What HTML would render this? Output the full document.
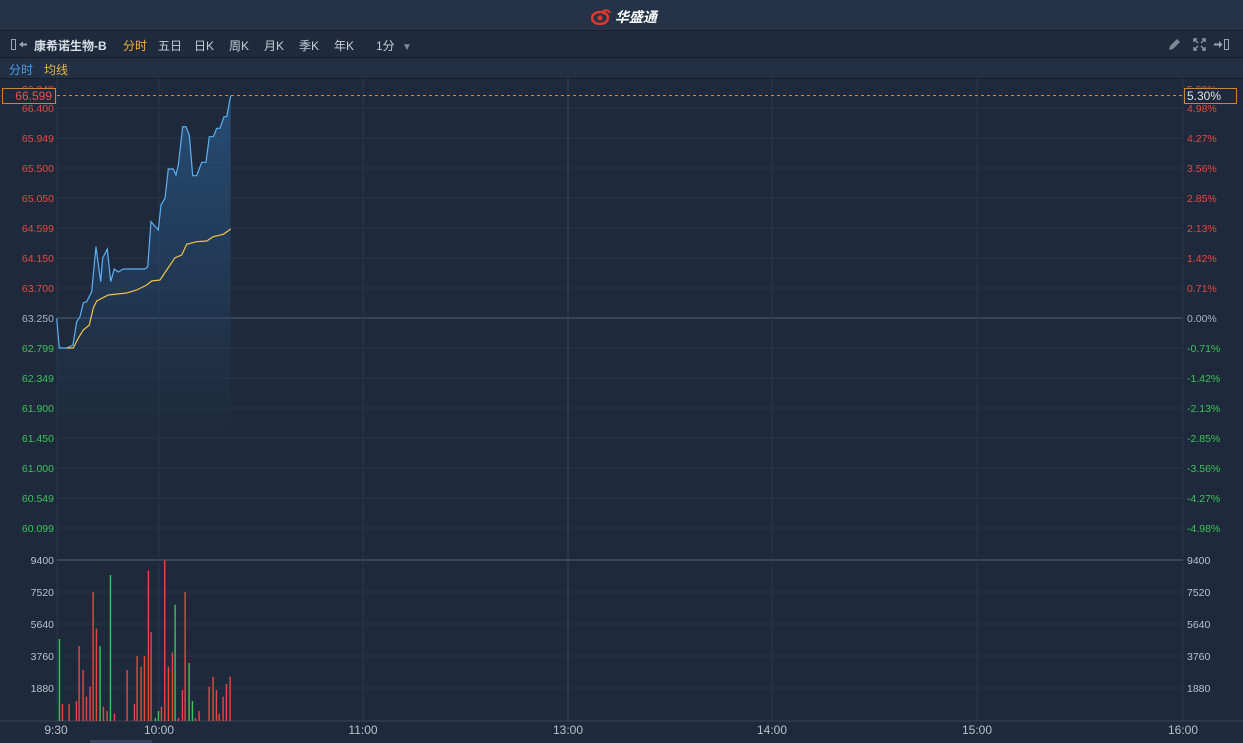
<!DOCTYPE html><html><head><meta charset="utf-8"><style>
body{margin:0;width:1243px;height:743px;background:#1e2a3b;font-family:"Liberation Sans","Noto Sans CJK SC",sans-serif;overflow:hidden;position:relative}
.top{position:absolute;left:0;top:0;width:1243px;height:30px;background:#253348;border-bottom:1px solid #161f2c}
.logo{position:absolute;left:591px;top:7px;color:#fff;font-weight:bold;font-size:14px;font-style:italic}
.tb{position:absolute;left:0;top:31px;width:1243px;height:26px;background:#1f2b3d;border-bottom:1px solid #151e2a;font-size:12px;color:#c5cdd8}
.tb span{position:absolute;top:6px}
.r2{position:absolute;left:0;top:58px;width:1243px;height:20px;background:#223045;border-bottom:1px solid #151e2a;font-size:12px}
svg{position:absolute;left:0;top:0}
</style></head><body>
<div class="top"><div class="logo"><svg style="position:relative;display:inline-block;vertical-align:-3px" width="20" height="16" viewBox="0 0 20 16"><ellipse cx="9" cy="9" rx="8" ry="6" fill="none" stroke="#e4352d" stroke-width="2.5"/><circle cx="9" cy="9" r="2.5" fill="#e4352d"/><path d="M12 2 Q17 0 19 4" stroke="#e4352d" stroke-width="2" fill="none"/></svg> 华盛通</div></div>
<div class="tb">
<svg style="left:10px;top:7px" width="18" height="13"><rect x="1.5" y="1.5" width="4" height="10" fill="none" stroke="#9aa4b2"/><path d="M9 6.5 L13 3.5 V9.5Z M12 5.5 H17 V7.5 H12Z" fill="#9aa4b2"/></svg>
<span style="left:34px;font-weight:bold;color:#d8dee6">康希诺生物-B</span>
<span style="left:123px;color:#f0b23a">分时</span>
<span style="left:158px">五日</span><span style="left:194px">日K</span><span style="left:229px">周K</span><span style="left:264px">月K</span><span style="left:299px">季K</span><span style="left:334px">年K</span><span style="left:376px">1分 <span style="position:static;color:#7d8896;font-size:10px;margin-left:4px">▼</span></span>
<svg style="left:1166px;top:6px" width="16" height="15"><path d="M3 13 L4 9 L11 2 L14 5 L7 12 Z" fill="#7d8896"/></svg>
<svg style="left:1192px;top:6px" width="15" height="15"><path d="M2 5 V2 H5 M2 2 L6 6 M13 5 V2 H10 M13 2 L9 6 M2 10 V13 H5 M2 13 L6 9 M13 10 V13 H10 M13 13 L9 9" stroke="#8a95a3" stroke-width="1.4" fill="none"/></svg>
<svg style="left:1213px;top:6px" width="18" height="15"><path d="M1 6.5 H6 V4 L9.5 7.5 L6 11 V8.5 H1Z" fill="#9aa4b2"/><rect x="11.5" y="2.5" width="4" height="10" fill="none" stroke="#9aa4b2"/></svg>
</div>
<div class="r2"><span style="position:absolute;left:9px;top:3px;color:#4a9ee6">分时</span><span style="position:absolute;left:44px;top:3px;color:#e9b54a">均线</span></div>
<svg id="s" width="1243" height="743" style="top:0" font-family="Liberation Sans,sans-serif" font-size="11"></svg>
<script>
var s='',i;
for(i=0;i<15;i++){var y=108+i*30;s+='<line x1="57" x2="1183" y1="'+y+'" y2="'+y+'" stroke="#28364a"/>';}
for(i=0;i<5;i++){var y=560+i*32;s+='<line x1="57" x2="1183" y1="'+y+'" y2="'+y+'" stroke="'+(i==0?'#53627a':'#28364a')+'"/>';}
s+='<line x1="57" x2="1183" y1="318" y2="318" stroke="#4f5e74"/>';
[57,159,363,568,772,977,1183].forEach(function(x,k){s+='<line x1="'+x+'" x2="'+x+'" y1="78" y2="721" stroke="'+(k==3?'#35445a':'#28364a')+'"/>';});
s+='<line x1="0" x2="1243" y1="721" y2="721" stroke="#3a475a"/>';
var L=['66.849','66.400','65.949','65.500','65.050','64.599','64.150','63.700','63.250','62.799','62.349','61.900','61.450','61.000','60.549','60.099'];
var R=['5.69%','4.98%','4.27%','3.56%','2.85%','2.13%','1.42%','0.71%','0.00%','-0.71%','-1.42%','-2.13%','-2.85%','-3.56%','-4.27%','-4.98%'];
for(i=0;i<16;i++){var y=(i==0?89:108+(i-1)*30)+4;var c=i<8?'#e8473f':(i==8?'#aab3bf':'#3cc25a');
s+='<text x="54" y="'+y+'" text-anchor="end" fill="'+c+'" font-size="10.5">'+L[i]+'</text><text x="1187" y="'+y+'" fill="'+c+'" font-size="10.5">'+R[i]+'</text>';}
['9400','7520','5640','3760','1880'].forEach(function(t,k){var y=564+k*32;s+='<text x="54" y="'+y+'" text-anchor="end" fill="#b8c0cb" font-size="10.5">'+t+'</text><text x="1187" y="'+y+'" fill="#b8c0cb" font-size="10.5">'+t+'</text>';});
[['9:30',56],['10:00',159],['11:00',363],['13:00',568],['14:00',772],['15:00',977],['16:00',1183]].forEach(function(a){s+='<text x="'+a[1]+'" y="734" text-anchor="middle" fill="#b8c0cb" font-size="12">'+a[0]+'</text>';});
s+='<rect x="90" y="740" width="62" height="3" fill="#34435a"/>';
var B=[[56.7,318.3],[59.3,348],[66.7,348],[73,345],[76.7,321.7],[80,316.7],[83.3,303],[86.7,301.7],[91.7,291.7],[96,246.7],[97.7,260],[100.7,281.7],[102.7,258],[107.3,249],[110.7,281.7],[114.3,269],[118.3,272],[123.3,269],[145,269],[147.7,266.7],[151,221.7],[158.3,230],[161,205],[165,198.3],[168.3,169],[173.3,169],[176,175],[178.3,165],[182.7,126.7],[186,126.7],[189.3,135],[192.7,175.7],[196.7,175.7],[201.7,162.3],[206,162.3],[209.3,136.7],[213.3,136.7],[216.7,128.3],[220,128.3],[224,116.7],[226.7,116.7],[230.7,95.5]];
var Y=[[66.7,348],[73.3,348],[78.3,338],[83.3,330],[89.3,325],[93.3,308],[96.7,301],[108.3,295],[126.7,293],[136.7,290],[146.7,285],[151.7,281],[160,280],[166.7,270],[175,257.7],[181.7,255],[186.7,244.3],[196.7,241.7],[206.7,241],[213.3,236.7],[223.3,234.3],[230.7,229]];
var p=B.map(function(a){return a.join(',')}).join(' ');
s+='<defs><linearGradient id="g" x1="0" y1="0" x2="0" y2="1"><stop offset="0" stop-color="#2a5a8a" stop-opacity=".75"/><stop offset="0.5" stop-color="#24466c" stop-opacity=".45"/><stop offset="1" stop-color="#1e2a3b" stop-opacity="0"/></linearGradient></defs>';
s+='<polygon points="56.7,495 '+p+' 230.7,495" fill="url(#g)"/>';
s+='<polyline points="'+p+'" fill="none" stroke="#5cb0f2" stroke-width="1.2"/>';
s+='<polyline points="'+Y.map(function(a){return a.join(',')}).join(' ')+'" fill="none" stroke="#efc34a" stroke-width="1.2"/>';
s+='<line x1="57" x2="1183" y1="95.5" y2="95.5" stroke="#d98236" stroke-dasharray="3,3"/>';
s+='<rect x="2.5" y="88.5" width="53" height="15" fill="#1e2a3b" stroke="#c98538"/><text x="52" y="100" text-anchor="end" fill="#f0504a" font-size="12">66.599</text>';
s+='<rect x="1184.5" y="88.5" width="52" height="15" fill="#1e2a3b" stroke="#c98538"/><text x="1187" y="100" fill="#dde4ee" font-size="12">5.30%</text>';
var V=[[178,297,1],[187,492],[207,492],[229,483],[237,318],[249,390],[259,470],[270,440],[279,156],[289,266],[300,318,1],[310,500],[321,513],[331,105,1],[343,521],[381,390],[403,492],[411,348],[423,380],[433,348],[445,92],[453,276],[466,534,1],[475,513,1],[484,500],[494,62],[505,380],[517,338],[525,194,1],[535,534],[547,450],[555,156],[567,369,1],[577,483,1],[586,534],[597,513],[627,440],[639,410],[649,450],[657,521],[669,470],[679,432],[690,410]];
V.forEach(function(v){var x=v[0]/3,y=v[1]/3+540;s+='<rect x="'+(x-0.6)+'" y="'+y+'" width="1.4" height="'+(721-y)+'" fill="'+(v[2]?'#3cc25a':'#e8473f')+'"/>';});
document.getElementById('s').innerHTML=s;
</script>
</body></html>
